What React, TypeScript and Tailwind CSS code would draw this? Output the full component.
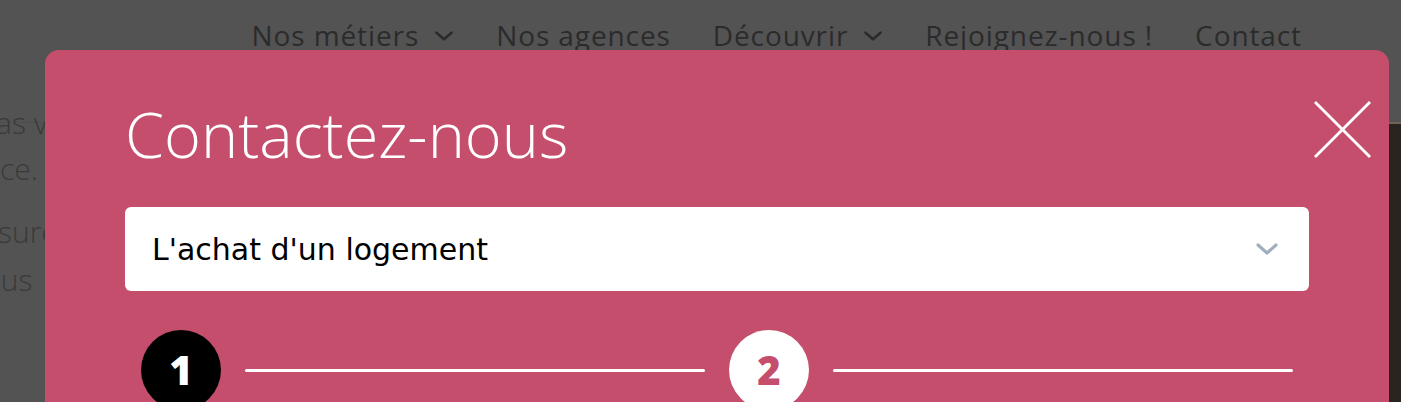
const navItems = [
  { label: "Nos métiers", dropdown: true },
  { label: "Nos agences", dropdown: false },
  { label: "Découvrir", dropdown: true },
  { label: "Rejoignez-nous !", dropdown: false },
  { label: "Contact", dropdown: false },
];

const bgLines = [
  { text: "as vers qui", cls: "-ml-[4px]" },
  { text: "ce.", cls: "ml-0" },
  { text: "surez-vous", cls: "-ml-[2px] mt-[17px]" },
  { text: "lus", cls: "-ml-[6px] mt-[2px]" },
];

function Chevron({ className }: { className: string }) {
  return (
    <svg viewBox="0 0 24 14" className={className} fill="none" stroke="currentColor" strokeWidth="3.2" strokeLinecap="round" strokeLinejoin="round">
      <polyline points="3,3 12,11 21,3" />
    </svg>
  );
}

export default function App() {
  return (
    <div className="relative h-[402px] w-[1401px] overflow-hidden bg-[#535353] font-['Open_Sans',sans-serif]">
      {/* Page behind the overlay */}
      <header className="flex justify-end pr-[78px] pt-[16px]">
        <nav className="flex items-center text-[28px] font-medium leading-[38px] tracking-[0.9px] text-[#2b2b2b]">
          {navItems.map((item) => (
            <div key={item.label} className="flex items-center gap-[15px] px-[21px]">
              <span>{item.label}</span>
              {item.dropdown && <Chevron className="mt-[2px] h-[12px] w-[20px]" />}
            </div>
          ))}
        </nav>
      </header>

      <div className="mt-[68px] h-px w-[45px] bg-[#4d4d4d]" />
      <div className="-mt-[23px] w-[45px] text-[30px] font-light leading-[46px] text-[#3a3a3a]">
        {bgLines.map((line) => (
          <p key={line.text} className={`whitespace-nowrap ${line.cls}`}>
            {line.text}
          </p>
        ))}
      </div>

      {/* Photo at the right edge */}
      <div className="absolute right-0 top-[122px] h-[280px] w-[12px] border-t-2 border-[#6d6455] bg-[#2a2421]" />

      {/* Modal */}
      <div className="absolute left-[45px] top-[50px] h-[400px] w-[1344px] rounded-[14px] bg-[#c44e6c] px-20 pt-[44px]">
        <button className="absolute right-[18px] top-[51px] h-[57px] w-[57px] text-white">
          <svg viewBox="0 0 57 57" className="h-full w-full" fill="none" stroke="currentColor" strokeWidth="2.8">
            <line x1="1" y1="1" x2="56" y2="56" />
            <line x1="56" y1="1" x2="1" y2="56" />
          </svg>
        </button>

        <h2 className="text-[63px] font-light leading-[80px] text-white">Contactez-nous</h2>

        <div className="mt-[33px] flex h-[84px] items-center justify-between rounded-md bg-white pl-[27px] pr-[30px]">
          <span className="font-['DejaVu_Sans',sans-serif] text-[30px] text-black">L'achat d'un logement</span>
          <Chevron className="h-[14px] w-[24px] text-[#a0aec0]" />
        </div>

        <div className="mt-[39px] flex items-center px-4">
          <div className="flex h-20 w-20 items-center justify-center rounded-full bg-black text-[40px] font-black text-white">
            1
          </div>
          <div className="mx-6 h-[3px] flex-1 rounded-full bg-white" />
          <div className="flex h-20 w-20 items-center justify-center rounded-full bg-white text-[40px] font-black text-[#c44e6c]">
            2
          </div>
          <div className="ml-6 h-[3px] flex-1 rounded-full bg-white" />
        </div>
      </div>
    </div>
  );
}
